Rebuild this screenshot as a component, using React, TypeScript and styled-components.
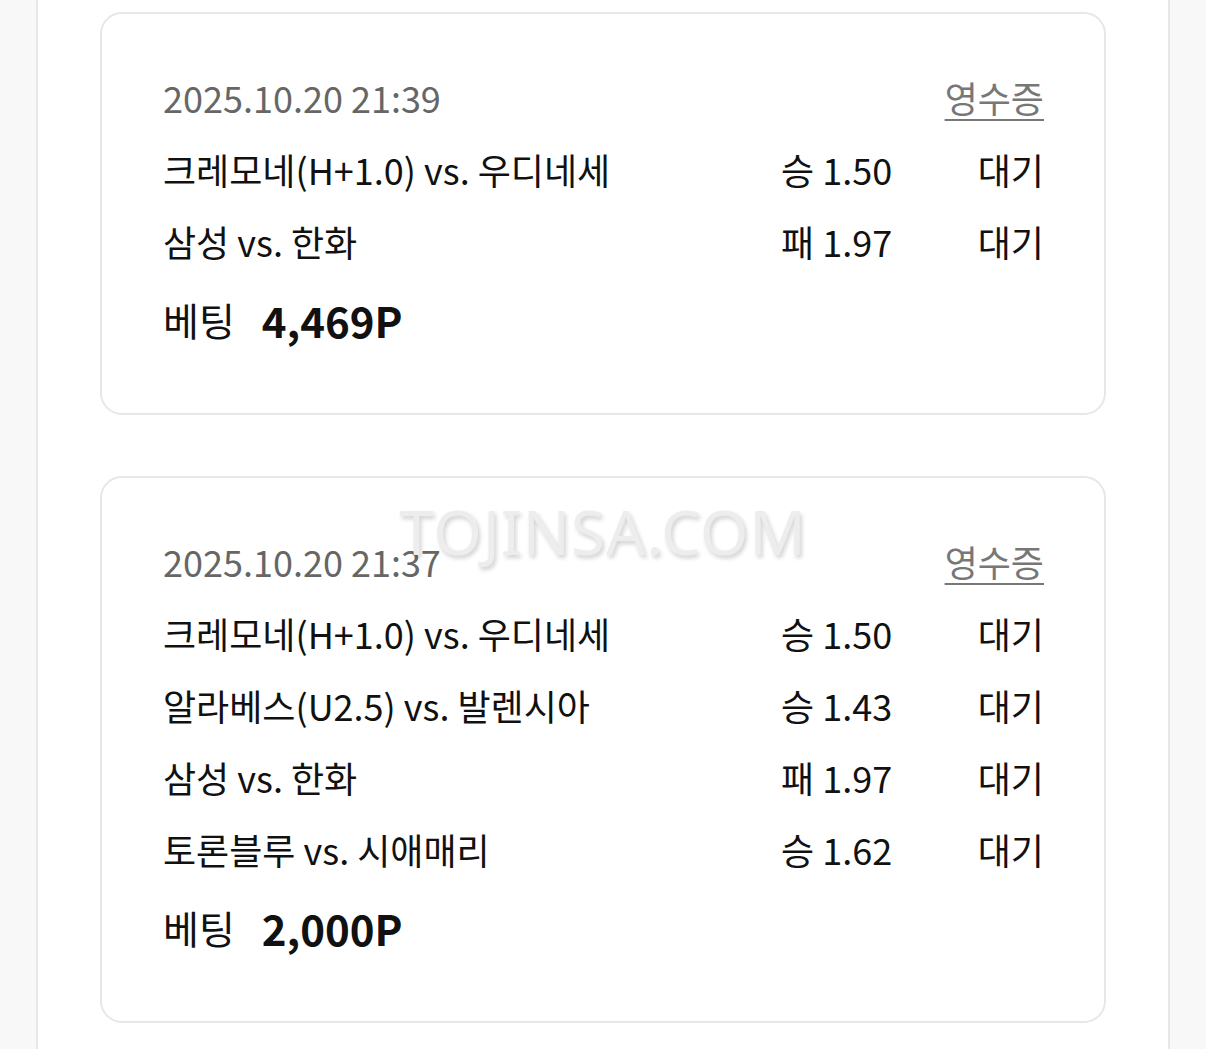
import React from 'react';
import styled, { createGlobalStyle } from 'styled-components';

type Pick = {
  match: string,
  odds: string,
  status: string,
}

type Bet = {
  date: string,
  picks: Pick[],
  amount: string,
}

const bets: Bet[] = [
  {
    date: '2025.10.20 21:39',
    picks: [
      { match: '크레모네(H+1.0) vs. 우디네세', odds: '승 1.50', status: '대기' },
      { match: '삼성 vs. 한화', odds: '패 1.97', status: '대기' },
    ],
    amount: '4,469P',
  },
  {
    date: '2025.10.20 21:37',
    picks: [
      { match: '크레모네(H+1.0) vs. 우디네세', odds: '승 1.50', status: '대기' },
      { match: '알라베스(U2.5) vs. 발렌시아', odds: '승 1.43', status: '대기' },
      { match: '삼성 vs. 한화', odds: '패 1.97', status: '대기' },
      { match: '토론블루 vs. 시애매리', odds: '승 1.62', status: '대기' },
    ],
    amount: '2,000P',
  },
]

export default () => {
  return (
    <>
      <GlobalStyle/>
      <Page>
        <Column>
          {bets.map((bet, i) => (
            <Card key={i}>
              <Header>
                <DateText>{bet.date}</DateText>
                <Receipt>영수증</Receipt>
              </Header>
              {bet.picks.map((p, j) => (
                <Row key={j}>
                  <Match>{p.match}</Match>
                  <Odds>{p.odds}</Odds>
                  <Status>{p.status}</Status>
                </Row>
              ))}
              <Total>
                <TotalLabel>베팅</TotalLabel>
                <Amount>{bet.amount}</Amount>
              </Total>
            </Card>
          ))}
        </Column>
        <Watermark>TOJINSA.COM</Watermark>
      </Page>
    </>
  )
}

const GlobalStyle = createGlobalStyle`
  html, body {
    margin: 0;
    padding: 0;
    background: #f8f8f9;
  }
  body {
    font-family: "Noto Sans CJK KR", "Noto Sans", sans-serif;
    color: #111;
  }
`

const Page = styled.div`
  position: relative;
  min-height: 1049px;
`

const Column = styled.div`
  width: 1134px;
  box-sizing: border-box;
  margin: 0 auto;
  min-height: 1049px;
  background: #fff;
  border-left: 2px solid #e6e7ea;
  border-right: 2px solid #e6e7ea;
  padding: 12px 62px 40px;
  display: flex;
  flex-direction: column;
  gap: 61px;
`

const Card = styled.div`
  border: 2px solid #e6e7ea;
  border-radius: 22px;
  padding: 47px 60px 58px 61px;
  display: flex;
  flex-direction: column;
`

const Header = styled.div`
  display: flex;
  justify-content: space-between;
  align-items: center;
  height: 72px;
`

const DateText = styled.span`
  font-size: 36px;
  color: #666;
`

const Receipt = styled.span`
  font-size: 36px;
  color: #777;
  text-decoration: underline;
  text-underline-offset: 6px;
  text-decoration-thickness: 2px;
`

const Row = styled.div`
  display: grid;
  grid-template-columns: 1fr 142px 121px;
  align-items: center;
  height: 72px;
  font-size: 36px;
  color: #111;
`

const Match = styled.span`
  white-space: nowrap;
`

const Odds = styled.span`
  white-space: nowrap;
`

const Status = styled.span`
  text-align: right;
`

const Total = styled.div`
  display: flex;
  align-items: center;
  gap: 27px;
  height: 72px;
  margin-top: 6px;
`

const TotalLabel = styled.span`
  font-size: 39px;
`

const Amount = styled.span`
  font-size: 42px;
  font-weight: 700;
`

const Watermark = styled.div`
  position: absolute;
  top: 489px;
  left: 0;
  right: 0;
  text-align: center;
  font-family: "Noto Sans", sans-serif;
  font-size: 62px;
  letter-spacing: 1px;
  color: #ededed;
  text-shadow: 2px 3px 4px rgba(0, 0, 0, 0.18);
  pointer-events: none;
`
